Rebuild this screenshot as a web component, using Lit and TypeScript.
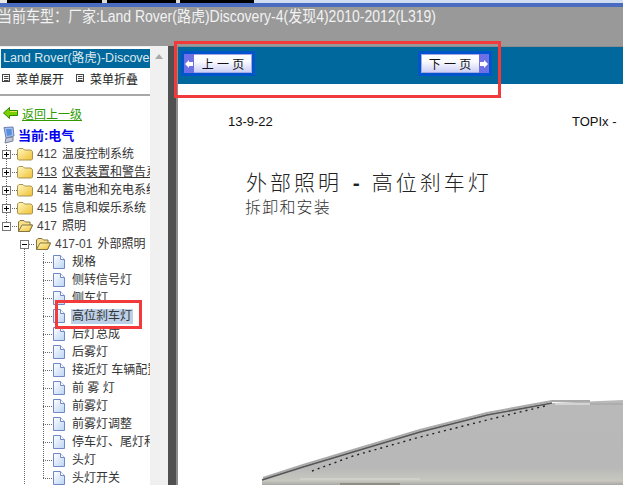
import { LitElement, html, css, svg } from "lit";
import { customElement } from "lit/decorators.js";

type Row = { level: number; kind: "closed" | "open" | "leaf"; num?: string; text: string; sel?: boolean; ul?: boolean };

const rows: Row[] = [
  { level: 0, kind: "closed", num: "412", text: "温度控制系统" },
  { level: 0, kind: "closed", num: "413", text: "仪表装置和警告系统", ul: true },
  { level: 0, kind: "closed", num: "414", text: "蓄电池和充电系统" },
  { level: 0, kind: "closed", num: "415", text: "信息和娱乐系统" },
  { level: 0, kind: "open", num: "417", text: "照明" },
  { level: 1, kind: "open", num: "417-01", text: "外部照明" },
  { level: 2, kind: "leaf", text: "规格" },
  { level: 2, kind: "leaf", text: "侧转信号灯" },
  { level: 2, kind: "leaf", text: "侧车灯" },
  { level: 2, kind: "leaf", text: "高位刹车灯", sel: true },
  { level: 2, kind: "leaf", text: "后灯总成" },
  { level: 2, kind: "leaf", text: "后雾灯" },
  { level: 2, kind: "leaf", text: "接近灯 车辆配置" },
  { level: 2, kind: "leaf", text: "前 雾 灯" },
  { level: 2, kind: "leaf", text: "前雾灯" },
  { level: 2, kind: "leaf", text: "前雾灯调整" },
  { level: 2, kind: "leaf", text: "停车灯、尾灯和牌照灯" },
  { level: 2, kind: "leaf", text: "头灯" },
  { level: 2, kind: "leaf", text: "头灯开关" },
];

const dot = (x1: number, y1: number, x2: number, y2: number) =>
  svg`<line x1=${x1} y1=${y1} x2=${x2} y2=${y2} stroke="#666" stroke-dasharray="1 1" shape-rendering="crispEdges"/>`;

const box = (x: number, open: boolean) => svg`
  <rect x=${x - 4} y="5" width="8" height="8" fill="#fff" stroke="#777" shape-rendering="crispEdges"/>
  <line x1=${x - 2} y1="9.5" x2=${x + 3} y2="9.5" stroke="#000" shape-rendering="crispEdges"/>
  ${open ? "" : svg`<line x1=${x + 0.5} y1="7" x2=${x + 0.5} y2="12" stroke="#000" shape-rendering="crispEdges"/>`}`;

function connector(r: Row, last: boolean) {
  if (r.level === 0) {
    return html`<svg class="conn" width="17" height="18">
      ${dot(6.5, 0, 6.5, r.kind === "open" ? 5 : 18)}${dot(10, 9.5, 17, 9.5)}${box(6, r.kind === "open")}
    </svg>`;
  }
  if (r.level === 1) {
    return html`<svg class="conn" width="35" height="18">
      ${dot(24.5, 14, 24.5, 18)}${dot(29, 9.5, 35, 9.5)}${box(24, true)}
    </svg>`;
  }
  return html`<svg class="conn" width="53" height="18">
    ${dot(24.5, 0, 24.5, 18)}${dot(43.5, 0, 43.5, last ? 9 : 18)}${dot(43, 9.5, 53, 9.5)}
  </svg>`;
}

const folder = (open: boolean) => html`<svg class="ic" width="16" height="14" viewBox="0 0 16 14">
  <defs><linearGradient id="fg" x1="0" y1="0" x2="1" y2="1"><stop offset="0" stop-color="#fff8c4"/><stop offset="1" stop-color="#f0c030"/></linearGradient></defs>
  ${open
    ? svg`<path d="M1.5 12.5V3L3 1.5H7L8.5 3H13V6H15.5L12.5 12.5Z" fill="#f8e08a" stroke="#857440"/>
          <path d="M1.5 12.5L5 6H15.5L12.5 12.5Z" fill="url(#fg)" stroke="#857440"/>`
    : svg`<path d="M.5 12V3L2 1.5H6L7.5 3H14L15.5 4.5V12L14.5 13H1.5Z" fill="url(#fg)" stroke="#a89550"/>`}
</svg>`;

const doc = html`<svg class="ic" width="12" height="14" viewBox="0 0 12 14">
  <defs><linearGradient id="dg" x1="0" y1="0" x2="1" y2="1"><stop offset="0" stop-color="#fff"/><stop offset="1" stop-color="#bcd4f4"/></linearGradient></defs>
  <path d="M.5.5H7.5L11.5 4.5V13.5H.5Z" fill="url(#dg)" stroke="#7088c8"/>
  <path d="M7.5.5V4.5H11.5" fill="#fff" stroke="#7088c8"/>
</svg>`;

const menuIcon = html`<svg class="mi" width="9" height="9" viewBox="0 0 9 9">
  <rect x=".5" y=".5" width="7" height="7" fill="#fff" stroke="#444"/>
  <path d="M2 2.5H6.5M2 4.5H6.5M2 6.5H6.5" stroke="#444"/>
</svg>`;

@customElement("app-root")
export class AppRoot extends LitElement {
  static styles = css`
    :host {
      display: block;
      width: 623px;
      height: 485px;
      position: relative;
      overflow: hidden;
      background: #999;
      font-family: "Liberation Sans", "Noto Sans CJK SC", sans-serif;
      font-size: 12px;
      color: #222;
    }
    .strip { display: flex; height: 3px; background: #cfdcf2; }
    .strip i { display: block; height: 3px; }
    .strip .k1 { width: 7px; background: #e8e8e8; }
    .strip .k2 { width: 95px; background: #000; }
    .strip .k3 { width: 5px; background: #ddd; }
    .strip .k4 { width: 69px; background: #000; }
    .strip .k5 { width: 74px; background: #000; border-left: 4px solid #ddd; }
    .band { height: 4px; background: #4a6cc0; }
    .head {
      height: 39px;
      color: #f2f2f2;
      font-size: 16px;
      line-height: 19px;
      margin-left: -2px;
      white-space: nowrap;
      transform: scaleX(0.875);
      transform-origin: left top;
    }
    .main { display: flex; height: 439px; background: #fff; }
    .left { width: 150px; flex: none; overflow: hidden; background: #fff; border-top: 1px solid #eee; box-sizing: border-box; }
    .title {
      margin: 2px 0 0 1px;
      height: 19px;
      background: #00689c;
      color: #dfe8ee;
      font-size: 12.5px;
      line-height: 19px;
      padding-left: 2px;
      white-space: nowrap;
      overflow: hidden;
    }
    .menu { display: flex; align-items: center; height: 20px; padding-left: 2px; white-space: nowrap; }
    .menu .mi { margin-right: 5px; }
    .menu span { margin-right: 12px; font-size: 12px; }
    .rule { height: 2px; background: #a8a8a8; margin-top: 6px; }
    .back { display: flex; align-items: center; height: 18px; margin-top: 8px; padding-left: 3px; }
    .back a { margin-left: 4px; color: #2e9a00; text-decoration: underline; white-space: nowrap; }
    .cur { display: flex; align-items: center; height: 21px; padding: 2px 0 0 2px; color: #0000ee; font-weight: bold; font-size: 13px; white-space: nowrap; }
    .cur svg { margin-right: 2px; }
    .row { display: flex; align-items: center; height: 18px; white-space: nowrap; }
    .conn { flex: none; display: block; }
    .ic { flex: none; display: block; }
    .label { margin-left: 3px; color: #333; padding: 0 1px; line-height: 15px; }
    .label.leaf { margin-left: 6px; }
    .label.sel { background: #bcd0e8; }
    .label.ul { text-decoration: underline; }
    .label b { font-weight: normal; color: #444; margin-right: 5px; }
    .scroll { width: 18px; flex: none; background: #f0f0f0; display: flex; justify-content: center; padding-top: 8px; box-sizing: border-box; }
    .arrow { width: 0; height: 0; border: 4px solid transparent; border-top: 0; border-bottom: 5px solid #aaa; }
    .split { width: 8px; flex: none; background: #505050; border-right: 2px solid #8c8c8c; }
    .right { flex: 1; display: flex; flex-direction: column; min-width: 0; overflow: hidden; border-top: 1px solid #8c8c8c; }
    .nav {
      height: 37px;
      flex: none;
      background: #00689c;
      display: flex;
      align-items: center;
      padding: 0 0 4px 3px;
      box-sizing: border-box;
    }
    .btn {
      width: 74px;
      height: 25px;
      box-sizing: border-box;
      border: 3px solid #0055cc;
      background: linear-gradient(#fff, #fafaff 40%, #c9ccf4);
      box-shadow: inset 0 0 0 1px #a4a8e4;
      display: flex;
      align-items: center;
      color: #111;
      font-size: 12px;
    }
    .btn.next { margin-left: 163px; }
    .btn .t { flex: 1; text-align: center; }
    .btn .a { width: 10px; align-self: stretch; background: #6f6fe6; display: flex; align-items: center; justify-content: center; }
    .doc { flex: 1; position: relative; display: flex; flex-direction: column; min-height: 0; background: #fff; }
    .meta { display: flex; justify-content: space-between; padding: 30px 0 0 50px; font-size: 13px; line-height: 15px; color: #111; white-space: nowrap; width: 445px; box-sizing: border-box; }
    .meta span:last-child { width: 51px; }
    h1 { margin: 41px 0 0 68px; font-size: 21px; font-weight: 300; letter-spacing: 3px; line-height: 26px; color: #222; white-space: nowrap; }
    h1 b { font-weight: bold; font-family: "Liberation Sans", sans-serif; margin-left: 2px; }
    h2 { margin: 2px 0 0 67px; font-size: 16px; font-weight: 300; letter-spacing: 1.2px; line-height: 20px; color: #333; white-space: nowrap; }
    .car { display: block; margin-top: auto; flex: none; }
    .mark { position: absolute; border: 3px solid #f23a3a; box-sizing: border-box; pointer-events: none; }
    .mark.a { left: 174px; top: 41px; width: 327px; height: 57px; }
    .mark.b { left: 55px; top: 300px; width: 87px; height: 29px; }
  `;

  render() {
    return html`
      <div class="strip"><i class="k1"></i><i class="k2"></i><i class="k3"></i><i class="k4"></i><i class="k5"></i></div>
      <div class="band"></div>
      <div class="head">当前车型：厂家:Land Rover(路虎)Discovery-4(发现4)2010-2012(L319)</div>
      <div class="main">
        <div class="left">
          <div class="title">Land Rover(路虎)-Discovery-4</div>
          <div class="menu">${menuIcon}<span>菜单展开</span>${menuIcon}<span>菜单折叠</span></div>
          <div class="rule"></div>
          <div class="back">
            <svg width="15" height="12" viewBox="0 0 15 12">
              <path d="M.5 6L6.5.5V3.5H14.5V8.5H6.5V11.5Z" fill="#7ccf00" stroke="#2a8a00"/>
              <path d="M7 4.5H14" stroke="#e8e860"/>
            </svg>
            <a>返回上一级</a>
          </div>
          <div class="cur">
            <svg width="14" height="18" viewBox="0 0 14 18">
              <path d="M2 1.5L11 1L12 10L4 12Z" fill="#a6c4f0" stroke="#6a7fb0"/>
              <path d="M4 3L9.5 3L10 9L5 10Z" fill="#5c8ee0"/>
              <path d="M4 12L11 11V15L3 17Z" fill="#c4c8d8" stroke="#77809c"/>
            </svg>
            当前:电气
          </div>
          ${rows.map(
            (r, i) => html`<div class="row">
              ${connector(r, i === rows.length - 1)}
              ${r.kind === "leaf" ? doc : folder(r.kind === "open")}
              <span class="label ${r.kind === "leaf" ? "leaf" : ""} ${r.sel ? "sel" : ""} ${r.ul ? "ul" : ""}">${r.num
                ? html`<b>${r.num}</b>`
                : ""}${r.text}</span>
            </div>`
          )}
        </div>
        <div class="scroll"><div class="arrow"></div></div>
        <div class="split"></div>
        <div class="right">
          <div class="nav">
            <div class="btn">
              <div class="a">
                <svg width="8" height="8" viewBox="0 0 8 8"><path d="M0 4L4 0V2H8V6H4V8Z" fill="#fff"/></svg>
              </div>
              <div class="t">上 一 页</div>
            </div>
            <div class="btn next">
              <div class="t">下 一 页</div>
              <div class="a">
                <svg width="8" height="8" viewBox="0 0 8 8"><path d="M8 4L4 0V2H0V6H4V8Z" fill="#fff"/></svg>
              </div>
            </div>
          </div>
          <div class="doc">
            <div class="meta"><span>13-9-22</span><span>TOPIx -</span></div>
            <h1>外部照明<b> - </b>高位刹车灯</h1>
            <h2>拆卸和安装</h2>
            <svg class="car" width="445" height="90" viewBox="178 395 445 90">
              <defs>
                <linearGradient id="low" x1="0" y1="0" x2="0" y2="1">
                  <stop offset="0" stop-color="#b9b9b9"/>
                  <stop offset=".8" stop-color="#b8b8b8"/>
                  <stop offset=".95" stop-color="#c8c8c0"/>
                  <stop offset="1" stop-color="#a8a8a4"/>
                </linearGradient>
              </defs>
              <path d="M262 485V479L303 466L353 451L420 431L487 414L553 403L623 400V485Z" fill="url(#low)"/>
              <path d="M263 478L303 465L353 450L420 430L487 413L552 401L590 401" fill="none" stroke="#aaa" stroke-width="2"/>
              <path d="M262 480L303 467L353 452L420 432L487 415L552 403" fill="none" stroke="#555" stroke-width="1.5"/>
              <path d="M312 471L353 456L420 437L487 420L545 406" fill="none" stroke="#222" stroke-width="1.4" stroke-dasharray="2 4"/>
              <path d="M555 404L623 404" stroke="#eee" stroke-width="1.2"/>
              <path d="M590 404L623 404" stroke="#888" stroke-width="1.2"/>
              <path d="M300 479L420 479" stroke="#dcdcd4" stroke-width="1"/>
              <path d="M340 484H400" stroke="#8e8e86" stroke-width="2"/>
            </svg>
          </div>
        </div>
      </div>
      <div class="mark a"></div>
      <div class="mark b"></div>
    `;
  }
}
